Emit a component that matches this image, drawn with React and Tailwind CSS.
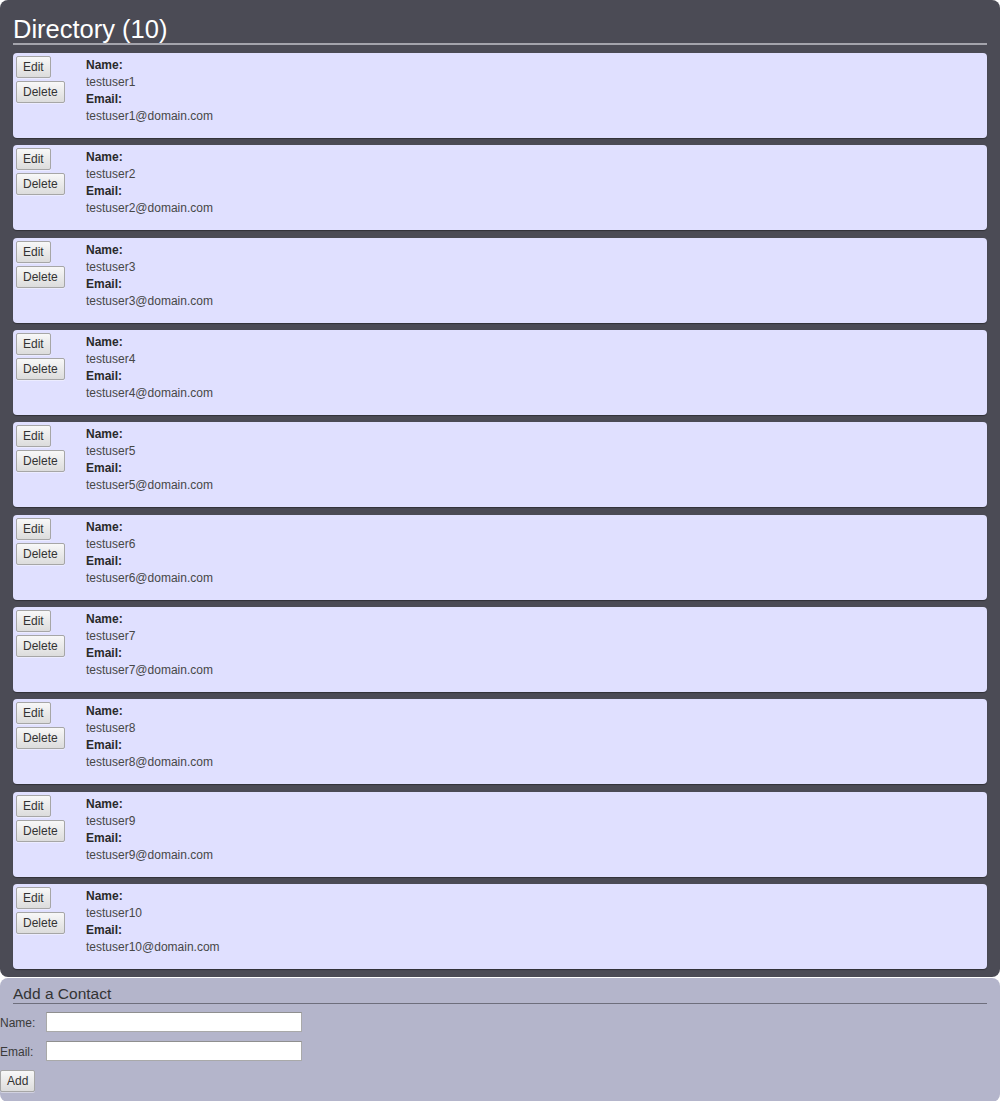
import React from "react";

const contacts = Array.from({ length: 10 }, (_, i) => ({
  name: `testuser${i + 1}`,
  email: `testuser${i + 1}@domain.com`,
}));

function Btn({ children }) {
  return (
    <button className="h-[22px] px-[6px] pt-[1px] border border-[#a6a6a6] rounded-[2px] bg-gradient-to-b from-[#f8f8f8] to-[#dcdcdc] text-[12px] leading-[19px] text-[#333] shadow-[0_1px_0_rgba(255,255,255,0.4)]">
      {children}
    </button>
  );
}

function ContactCard({ contact }) {
  return (
    <div className="flex h-[85px] rounded-[4px] bg-[#e0e0ff] pl-[3px] pt-[3px] shadow-[0_1px_1px_rgba(0,0,0,0.35)]">
      <div className="w-[70px] flex flex-col items-start gap-[3px]">
        <Btn>Edit</Btn>
        <Btn>Delete</Btn>
      </div>
      <div className="pt-[1px] text-[12px] leading-[17px] text-[#474747]">
        <div className="font-bold text-[#2a2a2a]">Name:</div>
        <div>{contact.name}</div>
        <div className="font-bold text-[#2a2a2a]">Email:</div>
        <div>{contact.email}</div>
      </div>
    </div>
  );
}

export default function App() {
  return (
    <div className="min-h-screen bg-white font-['Liberation_Sans',Arial,sans-serif]">
      <div className="bg-[#4b4b55] rounded-[8px] px-[13px] pb-[8px]">
        <h1 className="pt-[15px] text-[25.5px] leading-[28px] text-white border-b-2 border-[#a4a4ac]">
          Directory ({contacts.length})
        </h1>
        <div className="mt-[8px] flex flex-col gap-[7.33px]">
          {contacts.map((c) => (
            <ContactCard key={c.name} contact={c} />
          ))}
        </div>
      </div>

      <div className="mt-[1px] bg-[#b4b5cb] rounded-[8px] pt-[7px] pb-[10px]">
        <h2 className="mx-[13px] text-[15.5px] leading-[18px] text-[#333] border-b border-[#6e6e7c]">
          Add a Contact
        </h2>
        <div className="mt-[8px] flex flex-col gap-[9px] text-[12px] text-[#3a3a3a]">
          <label className="flex items-start">
            <span className="w-[46px] pt-[3px] leading-[17px]">Name:</span>
            <input className="w-[256px] h-[20px] bg-white border border-[#a9a9a9] border-t-[#8f8f8f] outline-none" />
          </label>
          <label className="flex items-start">
            <span className="w-[46px] pt-[3px] leading-[17px]">Email:</span>
            <input className="w-[256px] h-[20px] bg-white border border-[#a9a9a9] border-t-[#8f8f8f] outline-none" />
          </label>
          <div>
            <Btn>Add</Btn>
          </div>
        </div>
      </div>
    </div>
  );
}
